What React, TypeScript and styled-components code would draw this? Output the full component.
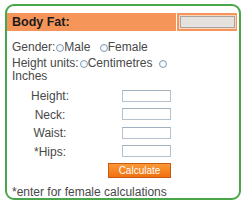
import React from "react";
import styled, { createGlobalStyle } from "styled-components";

const GlobalStyle = createGlobalStyle`
  html, body {
    margin: 0;
    padding: 0;
    background: #ffffff;
  }
  body {
    font-family: "Liberation Sans", Arial, sans-serif;
  }
`;

const Box = styled.div`
  box-sizing: border-box;
  margin: 4px 0 0 5px;
  width: 236px;
  height: 196px;
  border: 2px solid #4aa64a;
  border-radius: 9px;
  padding-top: 7px;
  color: #484848;
  font-size: 12px;
`;

const Header = styled.div`
  display: flex;
  align-items: stretch;
  height: 18px;
  margin-right: 2px;
  background: #f6955a;
`;

const Title = styled.div`
  flex: 1;
  display: flex;
  align-items: center;
  padding-left: 5px;
  font-weight: bold;
  font-size: 12.5px;
  color: #1a1a1a;
  border-right: 1px solid #ffffff;
`;

const HeaderCell = styled.div`
  width: 60px;
  display: flex;
  align-items: center;
  justify-content: center;
`;

const ResultInput = styled.input`
  box-sizing: border-box;
  width: 55px;
  height: 12px;
  margin: 0;
  padding: 0;
  border: 1px solid #a9a39e;
  outline: 1px solid #fbd4bd;
  background: #e5e1de;
`;

const Line = styled.div<{ $top: number }>`
  margin-top: ${(p) => p.$top}px;
  padding-left: 5px;
  line-height: 12.5px;
  white-space: nowrap;
`;

const Radio = styled.span<{ $gap?: number }>`
  display: inline-block;
  box-sizing: border-box;
  width: 8px;
  height: 8px;
  margin-left: ${(p) => p.$gap ?? 1}px;
  border: 1px solid #7f9bb6;
  border-radius: 50%;
  background: radial-gradient(circle at 60% 60%, #ffffff 0%, #e8eef4 100%);
  vertical-align: -0.5px;
`;

const Form = styled.div`
  margin-top: 5px;
  display: grid;
  grid-template-columns: 86px 1fr;
  grid-auto-rows: 18.5px;
  align-items: center;
`;

const Label = styled.div`
  text-align: center;
  line-height: 12px;
`;

const Field = styled.input`
  box-sizing: border-box;
  width: 49px;
  height: 12px;
  margin: 0 0 0 29px;
  padding: 0;
  border: 1px solid #b4c2cf;
  border-top-color: #9fb0c0;
  background: #ffffff;
`;

const ButtonRow = styled.div`
  margin-top: 2px;
  padding-left: 101px;
`;

const Button = styled.button`
  box-sizing: border-box;
  width: 63px;
  height: 15px;
  margin: 0;
  padding: 0;
  border: 1px solid #c65a10;
  background: linear-gradient(#fb9a3a, #f0700f);
  color: #ffffff;
  font-family: "Liberation Sans", Arial, sans-serif;
  font-size: 10px;
  line-height: 13px;
`;

const Note = styled.div`
  margin-top: 8px;
  padding-left: 5px;
  line-height: 12px;
  white-space: nowrap;
`;

const fields = ["Height:", "Neck:", "Waist:", "*Hips:"];

export default function App() {
  return (
    <>
      <GlobalStyle />
      <Box>
        <Header>
          <Title>Body Fat:</Title>
          <HeaderCell>
            <ResultInput readOnly />
          </HeaderCell>
        </Header>
        <Line $top={10}>
          Gender:<Radio />Male <Radio $gap={6} />Female
        </Line>
        <Line $top={3.5}>
          Height units:<Radio />Centimetres <Radio $gap={3} />
          <br />
          Inches
        </Line>
        <Form>
          {fields.map((f) => (
            <React.Fragment key={f}>
              <Label>{f}</Label>
              <div>
                <Field />
              </div>
            </React.Fragment>
          ))}
        </Form>
        <ButtonRow>
          <Button>Calculate</Button>
        </ButtonRow>
        <Note>*enter for female calculations</Note>
      </Box>
    </>
  );
}
